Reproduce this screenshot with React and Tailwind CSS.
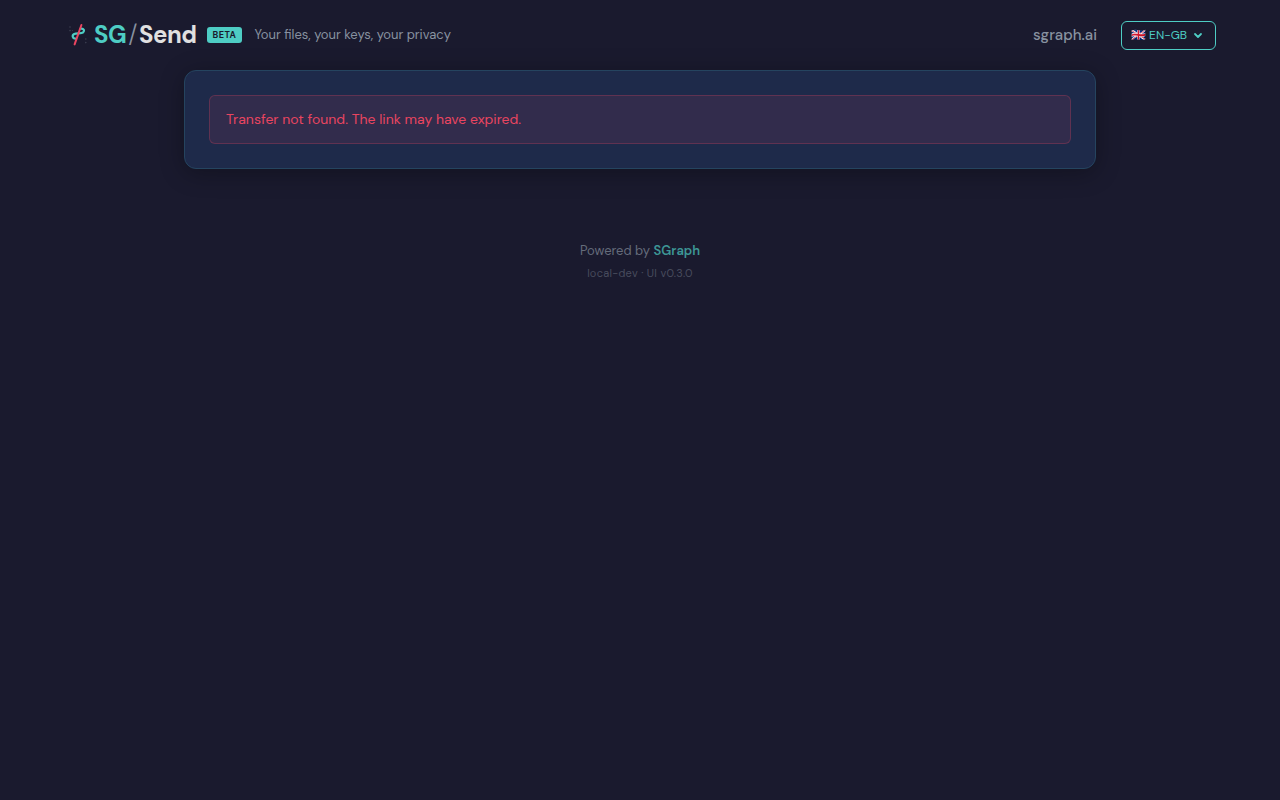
import React from "react";

function LogoMark() {
  return (
    <svg className="size-7 shrink-0" viewBox="0 0 28 28" fill="none" aria-hidden="true">
      <path
        d="M16.8 7.6C19.8 7.2 21 10 19.2 11.4C17.6 12.7 12.6 12 10.2 13C7.8 14.2 8.4 17.4 11.2 17.6"
        stroke="#4ecdc4"
        strokeWidth="2.2"
        strokeLinecap="round"
      />
      <path d="M17.4 4L10.6 23.4" stroke="#e94560" strokeWidth="2" strokeLinecap="round" />
      <g fill="#8892a0" opacity="0.3">
        <circle cx="6" cy="6" r="0.8" />
        <circle cx="6" cy="9.6" r="0.8" />
        <circle cx="8.4" cy="9.6" r="0.5" />
        <circle cx="21.8" cy="18" r="0.8" />
        <circle cx="21.8" cy="21.6" r="0.8" />
      </g>
    </svg>
  );
}

function Header() {
  return (
    <header className="mx-auto flex h-[70px] max-w-[1200px] items-center justify-between px-6">
      <div className="flex items-center gap-3">
        <div className="flex items-center gap-2.5">
          <a href="/" className="flex items-center gap-0.5 text-2xl font-bold">
            <LogoMark />
            <span className="flex gap-px tracking-[-0.02em]">
              <span className="text-[#4ecdc4]">SG</span>
              <span className="px-px font-light text-[#8892a0]">/</span>
              <span className="text-[#e0e0e0]">Send</span>
            </span>
          </a>
          <span className="rounded-[3px] bg-[#4ecdc4] px-1.5 text-[9px] leading-4 font-bold tracking-wider text-[#1a1a2e]">
            BETA
          </span>
        </div>
        <span className="text-[13px] text-[#8892a0]">Your files, your keys, your privacy</span>
      </div>
      <div className="flex items-center gap-6">
        <a href="https://sgraph.ai" className="text-[15px] font-medium text-[#8892a0]">
          sgraph.ai
        </a>
        <button
          type="button"
          aria-haspopup="listbox"
          aria-label="Language: EN-GB"
          className="flex h-[29px] items-center gap-[5px] rounded-md border border-[#4ecdc4] pr-[11px] pl-[9px] text-xs text-[#4ecdc4]"
        >
          <span className="whitespace-nowrap">🇬🇧 EN-GB</span>
          <svg className="size-3 shrink-0" viewBox="0 0 12 12" fill="none" aria-hidden="true">
            <path d="M3 5L6 8L9 5" stroke="#4ecdc4" strokeWidth="1.8" strokeLinecap="round" strokeLinejoin="round" />
          </svg>
        </button>
      </div>
    </header>
  );
}

export default function App() {
  return (
    <div className="min-h-screen bg-[#1a1a2e] font-['DM_Sans',Inter,sans-serif] text-[#e0e0e0]">
      <Header />
      <main className="mx-auto max-w-[960px] px-6">
        <section className="rounded-xl border border-[#25445f] bg-[#1e2a4a] p-6 shadow-[0_4px_24px_rgba(0,0,0,0.3)]">
          <p
            role="alert"
            className="rounded-md border border-[#e94560]/25 bg-[#e94560]/10 px-4 py-3 text-sm leading-[23px] text-[#e94560]"
          >
            Transfer not found. The link may have expired.
          </p>
        </section>
      </main>
      <footer className="mt-[72px] text-center">
        <p className="text-[13px] leading-5 text-[#656c7b]">
          Powered by{" "}
          <a href="https://sgraph.ai" className="font-semibold text-[#3d9695]">
            SGraph
          </a>
        </p>
        <p className="mt-1 text-[11px] leading-4 tracking-wide text-[#484c5d]">local-dev · UI v0.3.0</p>
      </footer>
    </div>
  );
}
